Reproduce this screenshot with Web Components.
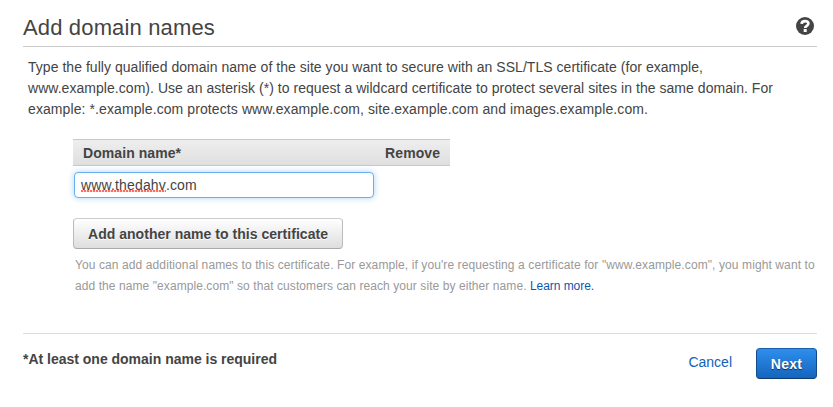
<!DOCTYPE html>
<html lang="en">
<head>
<meta charset="utf-8">
<title>Add domain names</title>
<style>
html, body { margin: 0; background: #fff; }
body { font-family: "Liberation Sans", Arial, sans-serif; font-size: 14px; color: #444; overflow: hidden; }
</style>
</head>
<body>
<domain-wizard></domain-wizard>

<script>
class Base extends HTMLElement {
  connectedCallback() {
    if (!this.shadowRoot) this.attachShadow({ mode: 'open' }).innerHTML = this.constructor.markup;
  }
}

// One line of running text; --ls sets its tracking.
customElements.define('text-line', class extends Base {
  static markup = `<style>:host{display:block;white-space:nowrap;letter-spacing:var(--ls,0)}</style><slot></slot>`;
});

customElements.define('help-icon', class extends Base {
  static markup = `<style>:host{display:block;width:18px;height:18px}svg{display:block}</style>
  <svg width="18" height="18" viewBox="0 0 18 18" aria-label="Help">
    <circle cx="9" cy="9" r="9" fill="#444"/>
    <path d="M5.6 6.9C5.8 3.2 12.4 3.2 12.4 6.6C12.4 8.9 9.2 8.7 9.2 11" fill="none" stroke="#fff" stroke-width="2.7"/>
    <rect x="7.7" y="12" width="3" height="3" fill="#fff"/>
  </svg>`;
});

customElements.define('page-header', class extends Base {
  static markup = `<style>
    :host{display:flex;justify-content:space-between;box-sizing:border-box;height:47px;padding:17px 3px 0 0;border-bottom:1px solid #ccc}
    h1{margin:-2px 0 0;font-size:22px;line-height:26px;font-weight:400;letter-spacing:.153px}
  </style><h1><slot></slot></h1><help-icon></help-icon>`;
});

customElements.define('table-head', class extends Base {
  static markup = `<style>
    :host{display:flex;justify-content:space-between;box-sizing:border-box;width:377px;height:27px;padding:0 10px;line-height:27px;
      font-weight:700;letter-spacing:.07px;border:solid #c8c8c8;border-width:1px 0;background:linear-gradient(#eee,#dfdfdf)}
  </style><slot></slot>`;
});

customElements.define('domain-field', class extends Base {
  static markup = `<style>
    :host{display:block;box-sizing:border-box;width:300px;height:26px;padding:0 6px;margin:6px 0 0 1px;border:1px solid #66b0f0;
      border-radius:4px;background:#fff;box-shadow:0 0 6px rgba(102,175,240,.55);line-height:24px;color:#444;letter-spacing:.15px;white-space:nowrap}
    .bad{display:inline-block;height:24px;background:linear-gradient(90deg,#ff6a63 2px,#ffd9d6 2px) 0 17px/3px 2px repeat-x}
  </style><span class="bad">www.thedahv</span>.com`;
});

customElements.define('ui-button', class extends Base {
  static markup = `<style>
    :host{display:block;box-sizing:border-box;width:270px;height:31px}
    button{display:block;box-sizing:border-box;width:100%;height:100%;padding:1px 0 0;font:700 14px "Liberation Sans",Arial,sans-serif;
      white-space:nowrap;border-radius:4px;letter-spacing:.033px;color:#444;border:1px solid #bbb;border-top-color:#ccc;border-bottom-color:#aaa;
      background:linear-gradient(#fff,#dedede);text-shadow:0 1px 0 #fff}
    :host([primary]){width:61px}
    :host([primary]) button{color:#fff;letter-spacing:.29px;border-color:#1c5fa8 #134a88 #0d3a6e;background:linear-gradient(#2f8eed,#1465bd);
      text-shadow:0 1px 1px rgba(0,0,0,.6)}
  </style><button><slot></slot></button>`;
});

customElements.define('page-footer', class extends Base {
  static markup = `<style>
    :host{display:flex;align-items:flex-start;border-top:1px solid #ddd;padding-top:14px}
    b{flex:1;padding-top:3px;line-height:16px;letter-spacing:-.011px}
    a{color:#1161b8;line-height:16px;padding-top:6px;margin-right:24px}
  </style><b>*At least one domain name is required</b><a>Cancel</a><ui-button primary>Next</ui-button>`;
});

customElements.define('domain-wizard', class extends Base {
  static markup = `<style>
    :host{display:block;box-sizing:border-box;width:817px;padding-left:23px}
    .intro{padding:10px 0 0 5px;line-height:21px}
    .form{padding:19px 0 0 50px}
    ui-button{margin-top:20px}
    .hint{padding:6px 0 0 2px;font-size:12px;line-height:21px;color:#999}
    .hint a{color:#0a58b0;letter-spacing:-.06px}
    page-footer{margin-top:36px}
  </style>
  <page-header>Add domain names</page-header>
  <div class="intro">
    <text-line style="--ls:.0386px">Type the fully qualified domain name of the site you want to secure with an SSL/TLS certificate (for example,</text-line>
    <text-line style="--ls:.042px">www.example.com). Use an asterisk (*) to request a wildcard certificate to protect several sites in the same domain. For</text-line>
    <text-line style="--ls:.0946px">example: *.example.com protects www.example.com, site.example.com and images.example.com.</text-line>
  </div>
  <div class="form">
    <table-head><span>Domain name*</span><span>Remove</span></table-head>
    <domain-field></domain-field>
    <ui-button>Add another name to this certificate</ui-button>
    <div class="hint">
      <text-line style="--ls:.099px">You can add additional names to this certificate. For example, if you're requesting a certificate for "www.example.com", you might want to</text-line>
      <text-line style="--ls:.077px">add the name "example.com" so that customers can reach your site by either name. <a>Learn more.</a></text-line>
    </div>
  </div>
  <page-footer></page-footer>`;
});
</script>
</body>
</html>
